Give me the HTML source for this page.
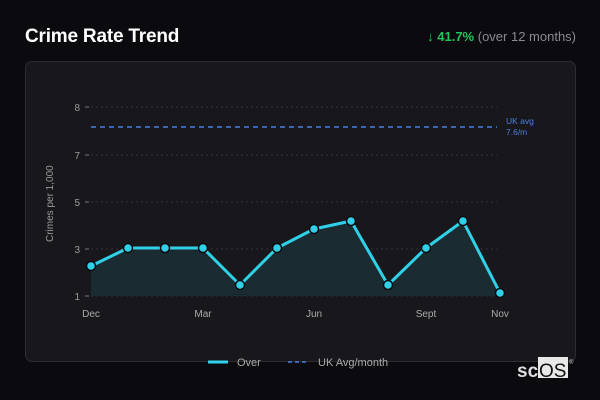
<!DOCTYPE html>
<html><head><style>
body{margin:0;width:600px;height:400px;background:#0b0b0f;font-family:"Liberation Sans",sans-serif;overflow:hidden;position:relative}
.t{position:absolute;left:25px;top:26px;color:#fff;font-weight:bold;font-size:19px;letter-spacing:-0.2px}
.s{position:absolute;right:24px;top:29px;font-size:13px;color:#8a8a90}
.s b{color:#22c55e}
.card{position:absolute;left:25px;top:61px;width:549px;height:299px;background:#18181c;border:1px solid #2c2c31;border-radius:7px}
svg{position:absolute;left:0;top:0}
</style></head><body>
<div class="t">Crime Rate Trend</div>
<div class="s"><b>↓ 41.7%</b> (over 12 months)</div>
<div class="card"></div>
<svg width="600" height="400" font-family="Liberation Sans, sans-serif">
<g stroke="#333" stroke-dasharray="2 3" stroke-width="1">
<line x1="91" y1="107" x2="497" y2="107"/><line x1="91" y1="155" x2="497" y2="155"/><line x1="91" y1="202" x2="497" y2="202"/><line x1="91" y1="249" x2="497" y2="249"/><line x1="91" y1="296" x2="497" y2="296"/></g>
<g fill="#999" font-size="10" text-anchor="end">
<text x="80" y="111">8</text><text x="80" y="159">7</text><text x="80" y="206">5</text><text x="80" y="253">3</text><text x="80" y="300">1</text></g>
<g stroke="#777"><line x1="85" y1="107" x2="89" y2="107"/><line x1="85" y1="155" x2="89" y2="155"/><line x1="85" y1="202" x2="89" y2="202"/><line x1="85" y1="249" x2="89" y2="249"/><line x1="85" y1="296" x2="89" y2="296"/></g>
<text transform="translate(53,242) rotate(-90)" fill="#999" font-size="10">Crimes per 1,000</text>
<line x1="91" y1="127" x2="497" y2="127" stroke="#4a7ee0" stroke-width="1.5" stroke-dasharray="5 4"/>
<text x="506" y="124" fill="#4a7ee0" font-size="8.5">UK avg</text><text x="506" y="135" fill="#4a7ee0" font-size="8.5">7.6/m</text>
<polygon fill="#1a2c31" points="91,296 91,266 128,248 165,248 203,248 240,285 277,248 314,229 351,221 388,285 426,248 463,221 500,293 500,296"/>
<polyline fill="none" stroke="#2fd0e8" stroke-width="3" stroke-linejoin="round" points="91,266 128,248 165,248 203,248 240,285 277,248 314,229 351,221 388,285 426,248 463,221 500,293"/>
<g fill="#2fd0e8" stroke="#0b0b0f" stroke-width="1.5">
<circle cx="91" cy="266" r="4.5"/><circle cx="128" cy="248" r="4.5"/><circle cx="165" cy="248" r="4.5"/><circle cx="203" cy="248" r="4.5"/><circle cx="240" cy="285" r="4.5"/><circle cx="277" cy="248" r="4.5"/><circle cx="314" cy="229" r="4.5"/><circle cx="351" cy="221" r="4.5"/><circle cx="388" cy="285" r="4.5"/><circle cx="426" cy="248" r="4.5"/><circle cx="463" cy="221" r="4.5"/><circle cx="500" cy="293" r="4.5"/></g>
<g fill="#aaa" font-size="10" text-anchor="middle">
<text x="91" y="317">Dec</text><text x="203" y="317">Mar</text><text x="314" y="317">Jun</text><text x="426" y="317">Sept</text><text x="500" y="317">Nov</text></g>
<line x1="208" y1="362" x2="228" y2="362" stroke="#2fd0e8" stroke-width="3"/>
<text x="237" y="366" fill="#aaa" font-size="11">Over</text>
<line x1="288" y1="362" x2="309" y2="362" stroke="#4a7ee0" stroke-width="1.5" stroke-dasharray="4 3"/>
<text x="318" y="366" fill="#aaa" font-size="11">UK Avg/month</text>
<rect x="538" y="357" width="30" height="21" fill="#e8e8e8"/>
<text x="517" y="377" fill="#ddd" font-size="19" font-weight="bold">sc</text>
<text x="539" y="377" fill="#111" font-size="19">OS</text>
<text x="569" y="364" fill="#ccc" font-size="6">®</text>
</svg>
</body></html>
